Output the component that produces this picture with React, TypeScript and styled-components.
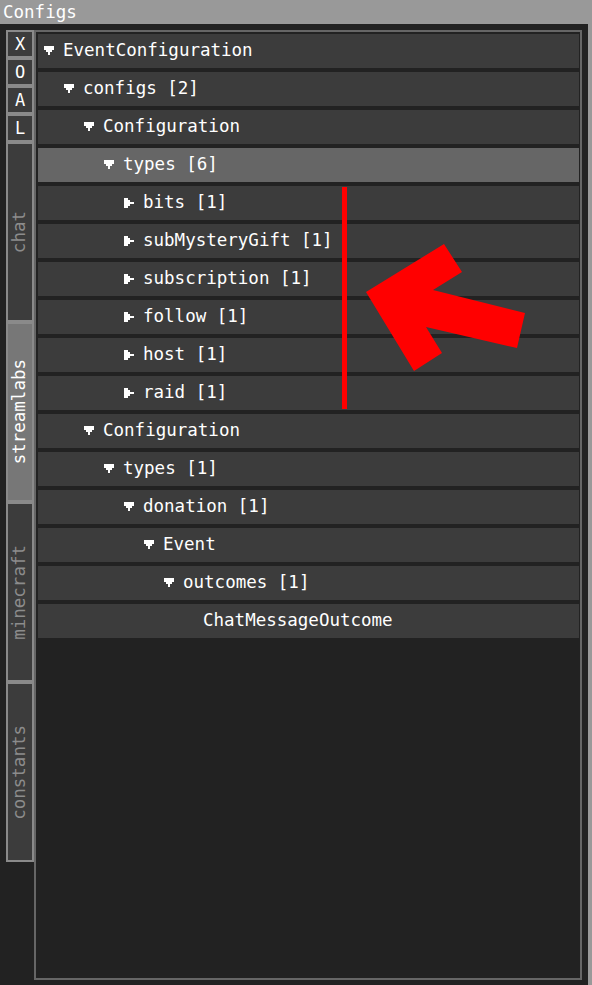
import React from 'react';
import styled, { createGlobalStyle } from 'styled-components';

const Global = createGlobalStyle`
  html, body { margin: 0; padding: 0; background: #999999; }
  * { box-sizing: border-box; }
`;

const FONT = `"DejaVu Sans Mono", "Liberation Mono", monospace`;

const Page = styled.div`
  position: relative;
  width: 592px;
  height: 985px;
  overflow: hidden;
  background: #999999;
  font-family: ${FONT};
  display: flex;
  flex-direction: column;
`;

const TitleBar = styled.div`
  height: 24px;
  line-height: 24px;
  padding-left: 3px;
  color: #ffffff;
  font-size: 17.5px;
  flex: none;
`;

const Window = styled.div`
  flex: 1;
  margin-right: 4px;
  background: #222222;
  display: flex;
  align-items: flex-start;
  padding: 6px 0 0 6px;
`;

const Sidebar = styled.div`
  width: 28px;
  display: flex;
  flex-direction: column;
  flex: none;
`;

const SideButton = styled.div`
  height: 28px;
  border: 2px solid #8a8a8a;
  background: #3c3c3c;
  color: #ffffff;
  font-size: 17px;
  display: flex;
  align-items: center;
  justify-content: center;
  line-height: 1;
`;

const SideTab = styled.div<{ $active?: boolean }>`
  height: 180px;
  border: 2px solid #8a8a8a;
  background: ${(p) => (p.$active ? '#777777' : '#3c3c3c')};
  color: ${(p) => (p.$active ? '#ffffff' : '#8c8c8c')};
  display: flex;
  align-items: center;
  justify-content: center;
`;

const TabLabel = styled.span`
  writing-mode: vertical-rl;
  transform: rotate(180deg);
  font-size: 17.5px;
  line-height: 1;
  white-space: nowrap;
`;

const Panel = styled.div`
  width: 548px;
  height: 950px;
  border: 2px solid #666666;
  background: #222222;
  padding: 2px 1px 2px 2px;
  display: flex;
  flex-direction: column;
  gap: 4px;
`;

const Row = styled.div<{ $level: number; $selected?: boolean }>`
  height: 34px;
  flex: none;
  background: ${(p) => (p.$selected ? '#666666' : '#3c3c3c')};
  display: flex;
  align-items: center;
  padding-left: ${(p) => 6 + p.$level * 20}px;
  padding-bottom: 2px;
  color: #ffffff;
  font-size: 17.5px;
  white-space: nowrap;
`;

const IconBox = styled.span`
  width: 10px;
  height: 10px;
  margin-right: 9px;
  margin-top: 2px;
  display: inline-flex;
  flex: none;
`;

const Overlay = styled.svg`
  position: absolute;
  left: 0;
  top: 0;
  pointer-events: none;
`;

type Node = { label: string; level: number; kind: 'open' | 'closed' | 'leaf'; selected?: boolean };

const nodes: Node[] = [
  { label: 'EventConfiguration', level: 0, kind: 'open' },
  { label: 'configs [2]', level: 1, kind: 'open' },
  { label: 'Configuration', level: 2, kind: 'open' },
  { label: 'types [6]', level: 3, kind: 'open', selected: true },
  { label: 'bits [1]', level: 4, kind: 'closed' },
  { label: 'subMysteryGift [1]', level: 4, kind: 'closed' },
  { label: 'subscription [1]', level: 4, kind: 'closed' },
  { label: 'follow [1]', level: 4, kind: 'closed' },
  { label: 'host [1]', level: 4, kind: 'closed' },
  { label: 'raid [1]', level: 4, kind: 'closed' },
  { label: 'Configuration', level: 2, kind: 'open' },
  { label: 'types [1]', level: 3, kind: 'open' },
  { label: 'donation [1]', level: 4, kind: 'open' },
  { label: 'Event', level: 5, kind: 'open' },
  { label: 'outcomes [1]', level: 6, kind: 'open' },
  { label: 'ChatMessageOutcome', level: 7, kind: 'leaf' },
];

const DownArrow = () => (
  <svg width="10" height="10" viewBox="0 0 10 10" shapeRendering="crispEdges">
    <polygon fill="#ffffff" points="0,0 10,0 10,4 8,4 8,6 6,6 6,9 4,9 4,6 2,6 2,4 0,4" />
  </svg>
);

const RightArrow = () => (
  <svg width="10" height="10" viewBox="0 0 10 10" shapeRendering="crispEdges">
    <polygon fill="#ffffff" points="0,0 4,0 4,2 6,2 6,4 10,4 10,6 6,6 6,8 4,8 4,10 0,10" />
  </svg>
);

export default function App() {
  return (
    <Page>
      <Global />
      <TitleBar>Configs</TitleBar>
      <Window>
        <Sidebar>
          <SideButton>X</SideButton>
          <SideButton>O</SideButton>
          <SideButton>A</SideButton>
          <SideButton>L</SideButton>
          <SideTab><TabLabel>chat</TabLabel></SideTab>
          <SideTab $active><TabLabel>streamlabs</TabLabel></SideTab>
          <SideTab><TabLabel>minecraft</TabLabel></SideTab>
          <SideTab><TabLabel>constants</TabLabel></SideTab>
        </Sidebar>
        <Panel>
          {nodes.map((n, i) => (
            <Row key={i} $level={n.level} $selected={n.selected}>
              <IconBox>
                {n.kind === 'open' && <DownArrow />}
                {n.kind === 'closed' && <RightArrow />}
              </IconBox>
              {n.label}
            </Row>
          ))}
        </Panel>
      </Window>
      <Overlay width="592" height="985" viewBox="0 0 592 985">
        <rect x="342" y="187" width="5" height="222" fill="#ff0000" />
        <polygon
          fill="#ff0000"
          points="366,292 444,244 462,272 433,290 525,313 517,348 426,327 442,353 414,371"
        />
      </Overlay>
    </Page>
  );
}
